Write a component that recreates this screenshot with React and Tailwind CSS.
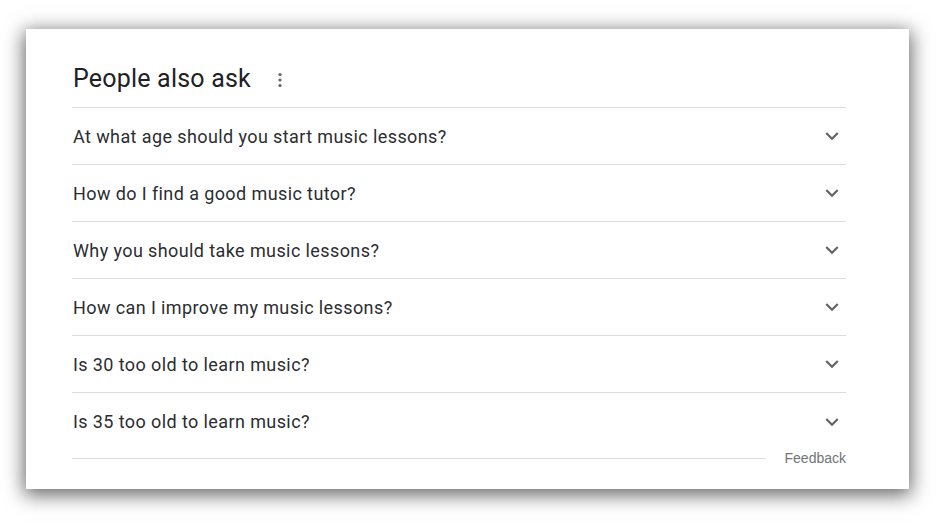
import React from 'react';

const questions = [
  'At what age should you start music lessons?',
  'How do I find a good music tutor?',
  'Why you should take music lessons?',
  'How can I improve my music lessons?',
  'Is 30 too old to learn music?',
  'Is 35 too old to learn music?',
];

function Chevron() {
  return (
    <svg width="26" height="26" viewBox="0 0 24 24" fill="#5f6368">
      <path d="M16.59 8.59L12 13.17 7.41 8.59 6 10l6 6 6-6z" />
    </svg>
  );
}

function Dots() {
  return (
    <svg width="6" height="16" viewBox="0 0 6 16" fill="#5f6368">
      <circle cx="3" cy="2.5" r="1.6" />
      <circle cx="3" cy="8" r="1.6" />
      <circle cx="3" cy="13.5" r="1.6" />
    </svg>
  );
}

export default function App() {
  return (
    <div className="w-[936px] h-[526px] bg-white pt-[29px] pl-[26px] overflow-hidden">
      <div
        className="w-[883px] h-[460px] bg-white shadow-[0_4px_18px_2px_rgba(0,0,0,0.6)] pt-[34px] pl-[46px] pr-[63px]"
        style={{ fontFamily: 'Roboto, "Liberation Sans", sans-serif' }}
      >
        <div className="flex items-center h-8 pb-[12px] box-content border-b border-[#dadce0]">
          <h2 className="text-[25px] leading-8 tracking-[0.2px] text-[#202124] pl-[1px]">People also ask</h2>
          <span className="ml-[26px] mt-[2px] flex items-center">
            <Dots />
          </span>
        </div>
        {questions.map((q, i) => (
          <div
            key={q}
            className={
              i < questions.length - 1
                ? 'flex items-center justify-between h-[57px] border-b border-[#dadce0]'
                : 'flex items-center justify-between h-[57px]'
            }
          >
            <span className="text-[18px] tracking-[0.4px] text-[#2b2d30] pl-[1px]">{q}</span>
            <span className="flex items-center mr-[1px]">
              <Chevron />
            </span>
          </div>
        ))}
        <div className="flex items-center h-4 gap-[19px]">
          <div className="flex-1 h-px bg-[#dadce0]" />
          <span
            className="text-[14px] leading-4 text-[#70757a]"
            style={{ fontFamily: '"Liberation Sans", Arial, sans-serif' }}
          >
            Feedback
          </span>
        </div>
      </div>
    </div>
  );
}
